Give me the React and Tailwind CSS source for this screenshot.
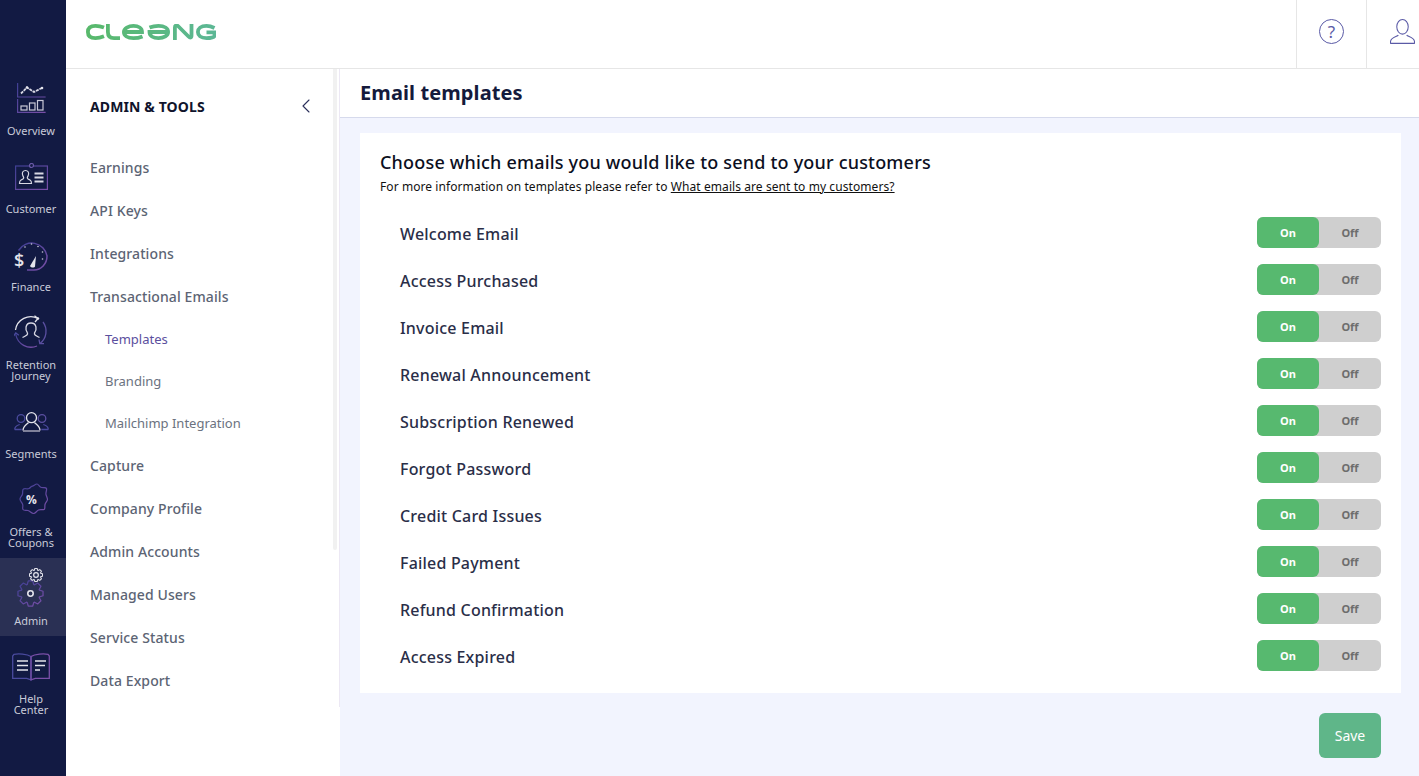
import { ChevronLeft } from "lucide-react";

const emails = [
  "Welcome Email",
  "Access Purchased",
  "Invoice Email",
  "Renewal Announcement",
  "Subscription Renewed",
  "Forgot Password",
  "Credit Card Issues",
  "Failed Payment",
  "Refund Confirmation",
  "Access Expired",
];

const menu = [
  { label: "Earnings" },
  { label: "API Keys" },
  { label: "Integrations" },
  { label: "Transactional Emails" },
  { label: "Templates", sub: true, active: true },
  { label: "Branding", sub: true },
  { label: "Mailchimp Integration", sub: true },
  { label: "Capture" },
  { label: "Company Profile" },
  { label: "Admin Accounts" },
  { label: "Managed Users" },
  { label: "Service Status" },
  { label: "Data Export" },
];

function Defs() {
  return (
    <svg width="0" height="0" className="absolute">
      <defs>
        <linearGradient id="rail" x1="0" y1="0" x2="1" y2="1">
          <stop offset="0" stopColor="#3f3f94" />
          <stop offset="1" stopColor="#7a4fa8" />
        </linearGradient>
        <linearGradient id="logo" gradientUnits="userSpaceOnUse" x1="0" y1="0" x2="130" y2="0">
          <stop offset="0" stopColor="#58b96b" />
          <stop offset="1" stopColor="#5cb795" />
        </linearGradient>
      </defs>
    </svg>
  );
}

function Logo() {
  return (
    <svg width="130" height="16" viewBox="0 0 130 16" fill="none" stroke="url(#logo)" strokeWidth="3.800" aria-label="Cleeng">
      <path d="M18 3.600C15 2.400 12 1.900 9.500 1.900 4 1.900 1.900 4.500 1.900 8s2.100 6.100 7.600 6.100c2.500 0 5.500-.6 8.500-1.800" />
      <path d="M21.900 0v8c0 4 2.100 6.100 6.100 6.100h6" />
      <path d="M38 8H56c0-3.700-3.500-6.100-8.500-6.100S37.900 4.300 37.900 8s3.600 6.100 9.600 6.100c3 0 6-.5 9-1.700" />
      <path d="M82 8H63.500c0 3.700 3.500 6.100 9 6.100S82.100 11.700 82.100 8s-3.600-6.100-9.600-6.100c-3 0-6 .5-9 1.700" />
      <path d="M88.900 16V3.500C88.900 1 91 1 92.500 2.500l10 10c1.500 1.500 3 1.500 3-1V0" />
      <path d="M128.500 4C125.500 2.500 123 1.900 120.500 1.900c-5.800 0-8.600 2.600-8.600 6.100s2.800 6.100 8.600 6.100c3 0 8-.6 8-2.500V8.300h-8" />
    </svg>
  );
}

function OverviewIcon() {
  return (
    <svg width="29" height="30" viewBox="0 0 29 30" fill="none" strokeWidth="1.200">
      <path d="M.6 0v14h28M.6 16v13.400h28" stroke="url(#rail)" />
      <path d="M4 10.500l6-6 7 4.500 8-4" stroke="#d8d8e4" strokeWidth="1.800" strokeDasharray="3 .8" />
      <circle cx="10" cy="4.500" r="1.300" fill="#e4e4ec" />
      <circle cx="25" cy="5" r="1.300" fill="#e4e4ec" />
      <rect x="4" y="23" width="6" height="4" stroke="#c8c8d8" />
      <rect x="12.500" y="20" width="5.500" height="7" stroke="#c8c8d8" />
      <rect x="20.500" y="17.500" width="5.500" height="9.500" stroke="#c8c8d8" />
    </svg>
  );
}

function CustomerIcon() {
  return (
    <svg width="33" height="27" viewBox="0 0 33 27" fill="none" strokeWidth="1.200">
      <rect x=".6" y="3" width="31.800" height="23.400" stroke="url(#rail)" />
      <circle cx="16.500" cy="2.500" r="2" stroke="#6a5aa8" fill="#121a43" />
      <path d="M10.500 7.500c-2.500 0-3.500 2-3 4 .3 1.500 1.200 2.500 1.200 3.500s-1.500 1.500-2.700 2c-1 .5-1.500 1.500-1.500 3.500h12c0-2-.5-3-1.500-3.500-1.200-.5-2.700-1-2.700-2s.9-2 1.200-3.500c.5-2-.5-4-3-4z" stroke="#d8d8e4" />
      <path d="M19.500 10.500h9M19.500 14.500h9M19.500 18.500h9" stroke="#d8d8e4" strokeWidth="1.800" />
    </svg>
  );
}

function FinanceIcon() {
  return (
    <svg width="34" height="31" viewBox="0 0 34 31" fill="none" strokeWidth="1.200">
      <path d="M4.500 10.500A15.500 15.500 0 0 1 33 16c0 8-6 14-13 14h-7" stroke="url(#rail)" strokeWidth="1.500" />
      <text x="0" y="27" fill="#e4e4ec" fontSize="18" fontFamily="Open Sans, sans-serif" fontWeight="600">$</text>
      <path d="M16 26l6-10-1 10.500c-.5 1.500-4 1.500-5-.5z" fill="#e4e4ec" />
      <circle cx="11" cy="7" r=".8" fill="#c8c8d8" />
      <circle cx="17.500" cy="4" r=".8" fill="#c8c8d8" />
      <circle cx="24" cy="6.500" r=".8" fill="#c8c8d8" />
      <circle cx="28.500" cy="12" r=".8" fill="#c8c8d8" />
      <circle cx="28.500" cy="19" r=".8" fill="#c8c8d8" />
    </svg>
  );
}

function RetentionIcon() {
  return (
    <svg width="34" height="34" viewBox="0 0 34 34" fill="none" strokeWidth="1.300">
      <path d="M1.500 15A15.500 15.500 0 0 1 24 3.500" stroke="#e4e4ec" />
      <path d="M20.500 .8l3.500 2.700-3 3.500" stroke="#e4e4ec" />
      <circle cx="24" cy="3.500" r="1.200" fill="#e4e4ec" />
      <path d="M29 7a15.500 15.500 0 0 1-3 21.500" stroke="#5a4fa0" />
      <path d="M25 24.500l.8 4.200 4.200 0" stroke="#5a4fa0" />
      <path d="M1.800 19.500A15.500 15.500 0 0 0 23 31" stroke="url(#rail)" />
      <path d="M-.5 21l2.300-3 3 2.300" stroke="#4a4a9e" />
      <path d="M13.500 18c-2.500-3-2.500-10 3.500-10s6 7 3.500 10c-.5 2 1 2.500 5 4.500M13.500 18c.5 2-1 2.500-5 4.500" stroke="#d8d8e4" />
    </svg>
  );
}

function SegmentsIcon() {
  return (
    <svg width="35" height="20" viewBox="0 0 35 20" fill="none" strokeWidth="1.300">
      <circle cx="7" cy="6.500" r="3.800" stroke="#4a4a9e" />
      <circle cx="28" cy="6.500" r="3.800" stroke="#5a4fa0" />
      <path d="M.7 17.500c0-3 2-4 5-5M34.300 17.500c0-3-2-4-5-5M.7 17.500h7M34.300 17.500h-7" stroke="#4a4a9e" />
      <circle cx="17.500" cy="5.700" r="5" stroke="#e4e4ec" />
      <path d="M9 18.500c0-4 3-5.500 5.500-8M26 18.500c0-4-3-5.500-5.500-8" stroke="#e4e4ec" />
      <path d="M9 19h17" stroke="#9a9ab0" strokeWidth="1.600" />
    </svg>
  );
}

function OffersIcon() {
  return (
    <svg width="33" height="33" viewBox="0 0 33 33" fill="none">
      <path
        d="M16.500 3.500c2 0 3.500-2.500 5.500-2.500 1.500 0 2.500 3 4.500 3.500s4.500-.5 5 1c.5 2-1 4-.5 6s1.500 3.500 1.500 5-2 3-2.500 5 .5 4.500-1 5-3.500-.5-5.500.5-3 3.500-5 3.500-3.500-2.500-5.500-3-4 .5-5-1 .5-3.500-.5-5.500-2.500-3-2.500-5 2-3 2.500-5-.5-4 1-5 3.500.5 5.500-.5 2-2.500 3.500-2.500z"
        stroke="url(#rail)"
        strokeWidth="1.200"
      />
      <text x="16.500" y="21" textAnchor="middle" fill="#e4e4ec" fontSize="12" fontWeight="700" fontFamily="Open Sans, sans-serif">%</text>
    </svg>
  );
}

function gearPath(cx, cy, outer, inner) {
  const points = [];
  for (let i = 0; i < 8; i++) {
    const a = (i * Math.PI) / 4;
    const w = 0.22;
    [
      [a - w * 1.6, inner],
      [a - w * 0.8, outer],
      [a + w * 0.8, outer],
      [a + w * 1.6, inner],
    ].forEach(([t, r]) => points.push(`${(cx + r * Math.cos(t)).toFixed(2)} ${(cy + r * Math.sin(t)).toFixed(2)}`));
  }
  return `M${points.join("L")}Z`;
}

function Gear({ size, stroke, inner, width }) {
  return (
    <svg width={size} height={size} viewBox="0 0 24 24" fill="none">
      <path d={gearPath(12, 12, 11.300, 8.500)} stroke={stroke} strokeWidth={width} strokeLinejoin="round" />
      <circle cx="12" cy="12" r={inner} stroke="#e4e4ec" strokeWidth={width + 0.300} />
    </svg>
  );
}

function AdminIcon() {
  return (
    <div className="relative h-[38px] w-[28px]">
      <div className="absolute top-[12px] left-0">
        <Gear size={27} stroke="url(#rail)" inner={2.400} width={1.100} />
      </div>
      <div className="absolute top-0 left-[12px]">
        <Gear size={14} stroke="#e4e4ec" inner={4} width={1.800} />
      </div>
    </div>
  );
}

function HelpIcon() {
  return (
    <svg width="38" height="28" viewBox="0 0 38 28" fill="none" strokeWidth="1.300">
      <path d="M19 3.500C15 .8 6 .4 2 1.300L.7 3v22.300h14l4.300 1.500z" stroke="#4a4a9e" />
      <path d="M19 3.500c4-2.700 13-3.100 17-2.200L37.300 3v22.300h-14L19 26.800z" stroke="#7a4fa8" />
      <path d="M5 8h11M5 12.500h11M5 17h11" stroke="#e4e4ec" strokeWidth="1.600" />
      <path d="M23 8h11M23 12.500h10M23 17h5" stroke="#e4e4ec" strokeWidth="1.600" />
    </svg>
  );
}

const rail = [
  { label: ["Overview"], icon: <OverviewIcon />, top: "pt-[15px]" },
  { label: ["Customer"], icon: <CustomerIcon />, top: "pt-[17px]" },
  { label: ["Finance"], icon: <FinanceIcon />, top: "pt-[16px]" },
  { label: ["Retention", "Journey"], icon: <RetentionIcon />, top: "pt-[13px]" },
  { label: ["Segments"], icon: <SegmentsIcon />, top: "pt-[21px]" },
  { label: ["Offers &", "Coupons"], icon: <OffersIcon />, top: "pt-[14px]" },
  { label: ["Admin"], icon: <AdminIcon />, top: "pt-[10px]", active: true },
  { label: ["Help", "Center"], icon: <HelpIcon />, top: "pt-[17px]" },
];

function RailItem({ item }) {
  return (
    <div className={`flex flex-col items-center pr-[4px] pb-[10px] ${item.active ? "bg-[#2a3054]" : ""}`}>
      <div className={`flex h-[57px] items-start justify-center ${item.top}`}>{item.icon}</div>
      {item.label.map((line) => (
        <span key={line} className="text-[11px] leading-[11px] text-[#c9cbd9]">
          {line}
        </span>
      ))}
    </div>
  );
}

function Toggle() {
  return (
    <div className="mb-[2px] flex h-[31px] w-[124px] rounded-[6px] bg-[#cfcfcf] text-[11px] font-bold">
      <div className="flex w-[62px] items-center justify-center rounded-[6px] bg-[#57b96f] pt-[1px] text-white">On</div>
      <div className="flex w-[62px] items-center justify-center pt-[1px] text-[#6d6d6d]">Off</div>
    </div>
  );
}

export default function App() {
  return (
    <div className="flex h-[776px] w-[1419px] overflow-hidden bg-[#f2f4fe] font-['Noto_Sans',sans-serif]">
      <Defs />
      <aside className="flex w-[66px] shrink-0 flex-col bg-[#121a43] pt-[68px]">
        {rail.map((item) => (
          <RailItem key={item.label[0]} item={item} />
        ))}
      </aside>

      <div className="flex min-w-0 flex-1 flex-col">
        <header className="flex h-[69px] shrink-0 items-stretch justify-between border-b border-[#e6e6e6] bg-white shadow-[0_1px_2px_rgba(0,0,0,0.03)]">
          <div className="flex items-center pb-[5px] pl-[20px]">
            <Logo />
          </div>
          <div className="flex">
            <div className="flex w-[70px] items-center justify-center border-l border-[#e6e6e6] pb-[5px]">
              <div className="flex h-[25px] w-[25px] items-center justify-center rounded-full border border-[#5a5aa6] text-[17px] leading-none text-[#5a5aa6]">
                ?
              </div>
            </div>
            <div className="flex w-[53px] items-center border-l border-[#e6e6e6] pb-[5px] pl-[23px]">
              <svg width="25" height="25" viewBox="0 0 24 24" fill="none" stroke="#5a5aa6" strokeWidth="1">
                <ellipse cx="12" cy="7.500" rx="5.500" ry="7" />
                <path d="M8 15.500c-1 1.500-7 2-7.500 6v1.600q0 .4.4 .4h22.200q.4 0 .4-.4v-1.600c-.5-4-6.500-4.500-7.500-6" />
                <path d="M.5 23.500h23" strokeWidth="1.400" />
              </svg>
            </div>
          </div>
        </header>

        <div className="flex min-h-0 flex-1">
          <nav className="relative w-[274px] shrink-0 bg-white text-[14px] font-medium tracking-[0.1px] text-[#5c6474]">
            <div className="absolute top-0 right-[3px] h-[481px] w-[4px] rounded-b-[2px] bg-[#f1f1f1]" />
            <div className="absolute top-0 right-0 h-[638px] w-px bg-[#ece8f4]" />
            <div className="flex h-[76px] items-center justify-between pr-[22px] pb-[2px] pl-[24px]">
              <span className="text-[14px] font-bold tracking-[0.12px] text-[#10142c]">ADMIN &amp; TOOLS</span>
              <ChevronLeft size={24} strokeWidth={1.100} className="text-[#2b2f5a]" />
            </div>
            <div className="pt-[1px]">
              {menu.map((item) =>
                item.sub ? (
                  <div
                    key={item.label}
                    className={`flex h-[42px] items-center pt-[2px] pl-[39px] text-[13px] font-normal tracking-normal ${
                      item.active ? "text-[#5b4f9e]" : "text-[#6b7280]"
                    }`}
                  >
                    {item.label}
                  </div>
                ) : (
                  <div key={item.label} className="flex h-[43px] items-center pl-[24px]">
                    {item.label}
                  </div>
                )
              )}
            </div>
          </nav>

          <main className="flex min-w-0 flex-1 flex-col">
            <div className="flex h-[49px] shrink-0 items-center border-b border-[#d6daec] bg-white pl-[20px]">
              <h1 className="text-[20px] font-bold tracking-[0.1px] text-[#141a3c]">Email templates</h1>
            </div>
            <div className="pt-[15px] pr-[18px] pl-[20px]">
              <section className="h-[560px] bg-white px-[20px] pt-[17px]">
                <h2 className="text-[18px] leading-[25px] font-medium tracking-[0.19px] text-[#0c0f1e]">
                  Choose which emails you would like to send to your customers
                </h2>
                <p className="mt-[4px] text-[12px] leading-[16px] tracking-[0.08px] text-[#111111]">
                  For more information on templates please refer to{" "}
                  <a className="underline">What emails are sent to my customers?</a>
                </p>
                <div className="pt-[15px]">
                  {emails.map((email) => (
                    <div key={email} className="flex h-[47px] items-center justify-between pl-[20px]">
                      <span className="text-[16px] font-medium tracking-[0.2px] text-[#2a2e48]">{email}</span>
                      <Toggle />
                    </div>
                  ))}
                </div>
              </section>
              <div className="flex justify-end pt-[20px] pr-[20px]">
                <button className="h-[45px] w-[62px] rounded-[6px] bg-[#5fb689] text-[14px] text-white">Save</button>
              </div>
            </div>
          </main>
        </div>
      </div>
    </div>
  );
}
